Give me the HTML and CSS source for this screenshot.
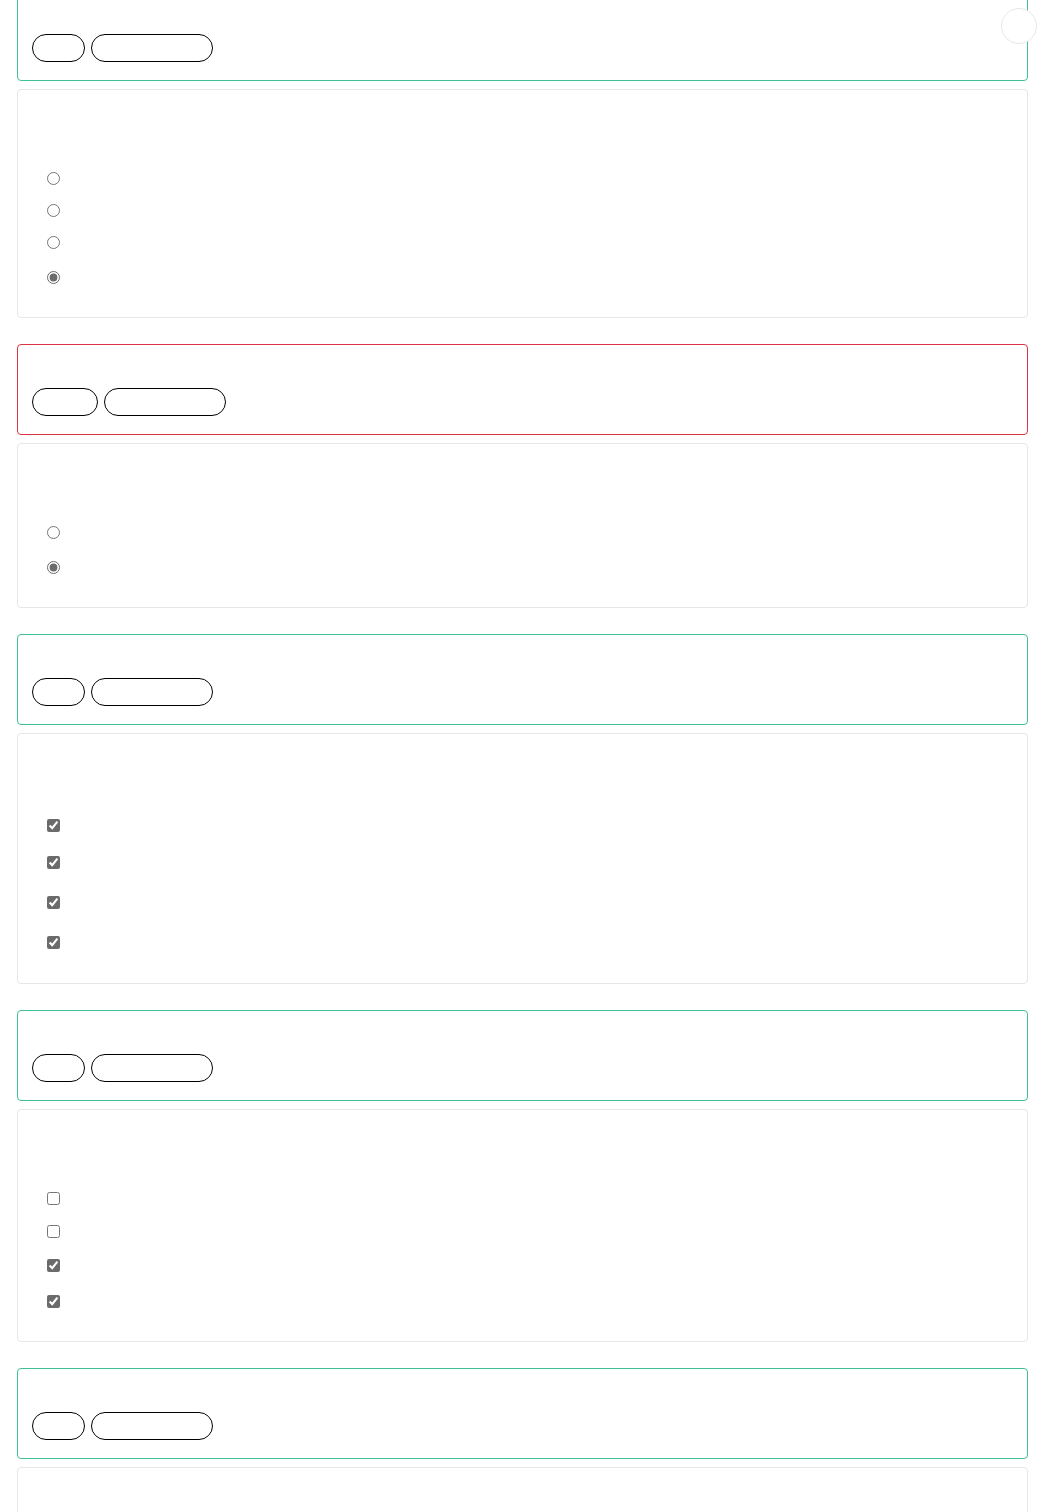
FILE: index.html
```html
<!DOCTYPE html>
<html lang="en">
<head>
  <meta charset="UTF-8" />
  <title>Quiz Review</title>
  <meta name="viewport" content="width=device-width, initial-scale=1.0"/>
  <link rel="stylesheet" href="styles.css">
</head>
<body>
  <button class="fab" type="button" aria-label="Menu"></button>

  <div class="review">
    <div class="group">
      <div class="result correct">
        <div class="result-title"></div>
        <div class="tags">
          <span class="tag tag-sm"></span>
          <span class="tag tag-lg"></span>
        </div>
      </div>
      <div class="question">
        <div class="question-text"></div>
        <label class="opt"><input type="radio" name="q1"></label>
        <label class="opt"><input type="radio" name="q1"></label>
        <label class="opt"><input type="radio" name="q1"></label>
        <label class="opt opt-lg"><input type="radio" name="q1" checked></label>
      </div>
    </div>

    <div class="group">
      <div class="result wrong">
        <div class="result-title"></div>
        <div class="tags">
          <span class="tag tag-md"></span>
          <span class="tag tag-lg"></span>
        </div>
      </div>
      <div class="question">
        <div class="question-text"></div>
        <label class="opt"><input type="radio" name="q2"></label>
        <label class="opt opt-lg"><input type="radio" name="q2" checked></label>
      </div>
    </div>

    <div class="group">
      <div class="result correct">
        <div class="result-title"></div>
        <div class="tags">
          <span class="tag tag-sm"></span>
          <span class="tag tag-lg"></span>
        </div>
      </div>
      <div class="question">
        <div class="question-text"></div>
        <label class="opt opt-lg"><input type="checkbox" checked></label>
        <label class="opt opt-mid"><input type="checkbox" checked></label>
        <label class="opt opt-xl"><input type="checkbox" checked></label>
        <label class="opt opt-tall"><input type="checkbox" checked></label>
      </div>
    </div>

    <div class="group">
      <div class="result correct">
        <div class="result-title"></div>
        <div class="tags">
          <span class="tag tag-sm"></span>
          <span class="tag tag-lg"></span>
        </div>
      </div>
      <div class="question">
        <div class="question-text"></div>
        <label class="opt"><input type="checkbox"></label>
        <label class="opt opt-sm"><input type="checkbox"></label>
        <label class="opt opt-sm"><input type="checkbox" checked></label>
        <label class="opt opt-lg"><input type="checkbox" checked></label>
      </div>
    </div>

    <div class="group">
      <div class="result correct">
        <div class="result-title"></div>
        <div class="tags">
          <span class="tag tag-sm"></span>
          <span class="tag tag-lg"></span>
        </div>
      </div>
      <div class="question">
        <div class="question-text"></div>
        <label class="opt"><input type="radio" name="q5"></label>
        <label class="opt"><input type="radio" name="q5"></label>
        <label class="opt"><input type="radio" name="q5" checked></label>
      </div>
    </div>
  </div>

  <script>
    // Review mode: answers are shown but can't be changed
    document.querySelectorAll(".opt input").forEach(input => {
      input.addEventListener("click", e => e.preventDefault());
    });
  </script>
</body>
</html>
```

FILE: styles.css
```css
:root {
  --green: #3fc096;
  --red: #dc3545;
  --border: #e6e6e6;
  --bg: #ffffff;
  --text: #212529;
  --input: #6b6b6b;
}
body {
  font-family: Roboto, 'Liberation Sans', sans-serif;
  background-color: var(--bg);
  color: var(--text);
  margin: 0;
}
.review {
  margin-top: -10px;
  padding: 0 16px 0 17px;
}
.group {
  display: flex;
  flex-direction: column;
  gap: 8px;
  margin-bottom: 26px;
}
.result {
  border: 1px solid var(--green);
  border-radius: 4px;
  padding: 15px 14px 18px;
}
.result.wrong {
  border-color: var(--red);
}
.result-title {
  height: 28px;
}
.tags {
  display: flex;
  gap: 6px;
}
.tag {
  display: block;
  height: 28px;
  box-sizing: border-box;
  border: 1px solid #000;
  border-radius: 14px;
  background: #fff;
}
.tag-sm { width: 53px; }
.tag-md { width: 66px; }
.tag-lg { width: 122px; }
.question {
  border: 1px solid var(--border);
  border-radius: 4px;
  padding: 0 14px 21px 29px;
}
.question-text {
  height: 72px;
}
.opt {
  display: flex;
  align-items: center;
  height: 32px;
}
.opt-sm { height: 34px; }
.opt-mid { height: 37px; }
.opt-lg { height: 38px; }
.opt-tall { height: 39px; }
.opt-xl { height: 42px; }
.opt input {
  margin: 0;
  accent-color: var(--input);
  cursor: default;
}
.fab {
  position: fixed;
  top: 8px;
  right: 7px;
  width: 36px;
  height: 36px;
  border: 1px solid var(--border);
  border-radius: 50%;
  background: #fff;
  padding: 0;
}
```
